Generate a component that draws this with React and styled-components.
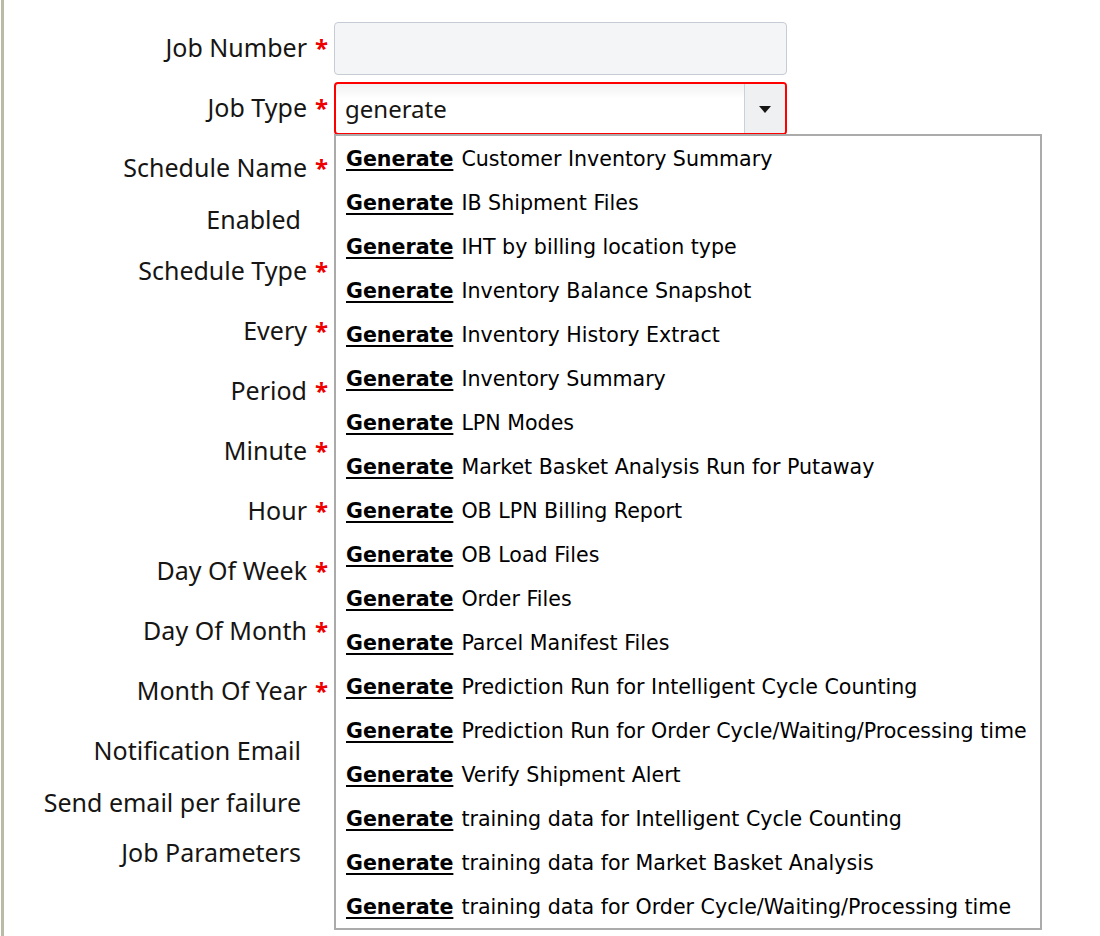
import React from "react";
import styled, { createGlobalStyle } from "styled-components";

const GlobalStyle = createGlobalStyle`
  html, body { margin: 0; padding: 0; background: #ffffff; }
  body { font-family: "Noto Sans", "Liberation Sans", sans-serif; color: #161513; }
`;

const Page = styled.div`
  min-height: 936px;
  padding-left: 1px;
  display: flex;
`;

const Frame = styled.div`
  flex: 1;
  border-left: 3px solid #babca8;
  min-height: 936px;
`;

const Form = styled.div`
  display: grid;
  grid-template-columns: 330px 453px;
  row-gap: 7px;
  padding-top: 22px;
`;

const Label = styled.div`
  box-sizing: border-box;
  display: flex;
  justify-content: flex-end;
  align-items: center;
  height: ${(p) => p.$h}px;
  padding-right: ${(p) => (p.$required ? 6 : 33)}px;
  padding-bottom: 3px;
  font-size: 25px;
  color: #161513;
  white-space: nowrap;
`;

const Star = styled.span`
  display: inline-block;
  width: 13px;
  margin-left: 8px;
  color: #ee0000;
  font-weight: 700;
  font-size: 24px;
  text-align: center;
`;

const Field = styled.div`
  position: relative;
  height: ${(p) => p.$h}px;
`;

const TextInput = styled.div`
  box-sizing: border-box;
  height: 100%;
  border: 1px solid #c5ccd3;
  border-radius: 4px;
  background: #f4f5f6;
`;

const Combo = styled.div`
  box-sizing: border-box;
  height: 100%;
  display: flex;
  border: 2px solid #ff0000;
  border-radius: 4px;
  background: linear-gradient(#f1f1f1, #ffffff 30%);
  overflow: hidden;
`;

const ComboValue = styled.div`
  flex: 1;
  display: flex;
  align-items: center;
  padding-left: 9px;
  font-size: 24px;
  color: #161513;
`;

const ComboButton = styled.div`
  width: 40px;
  display: flex;
  align-items: center;
  justify-content: center;
  background: #eef0f2;
  border-left: 1px solid #c8d1d9;
`;

const Caret = styled.span`
  width: 0;
  height: 0;
  border-left: 6px solid transparent;
  border-right: 6px solid transparent;
  border-top: 7px solid #161513;
  margin-top: 2px;
`;

const Check = styled.div`
  width: 22px;
  height: 22px;
  margin-top: 7px;
  border: 1px solid #8f9aa4;
  border-radius: 3px;
  background: #fff;
`;

const List = styled.div`
  position: absolute;
  top: 52px;
  left: 0;
  width: 708px;
  box-sizing: border-box;
  border: 2px solid #ababab;
  background: #ffffff;
  z-index: 10;
  font-family: "DejaVu Sans", "Liberation Sans", sans-serif;
  font-size: 20.6px;
  color: #000000;
`;

const Item = styled.div`
  height: 44px;
  display: flex;
  align-items: center;
  padding-left: 10px;
  padding-top: 1px;
  box-sizing: border-box;
  white-space: nowrap;
`;

const Match = styled.span`
  font-weight: 700;
  text-decoration: underline;
  text-decoration-thickness: 2px;
  text-underline-offset: 3px;
  margin-right: 8px;
`;

const options = [
  "Customer Inventory Summary",
  "IB Shipment Files",
  "IHT by billing location type",
  "Inventory Balance Snapshot",
  "Inventory History Extract",
  "Inventory Summary",
  "LPN Modes",
  "Market Basket Analysis Run for Putaway",
  "OB LPN Billing Report",
  "OB Load Files",
  "Order Files",
  "Parcel Manifest Files",
  "Prediction Run for Intelligent Cycle Counting",
  "Prediction Run for Order Cycle/Waiting/Processing time",
  "Verify Shipment Alert",
  "training data for Intelligent Cycle Counting",
  "training data for Market Basket Analysis",
  "training data for Order Cycle/Waiting/Processing time",
];

const rows = [
  { label: "Job Number", required: true, kind: "input", h: 53 },
  { label: "Job Type", required: true, kind: "combo", h: 53 },
  { label: "Schedule Name", required: true, kind: "input", h: 53 },
  { label: "Enabled", required: false, kind: "check", h: 36 },
  { label: "Schedule Type", required: true, kind: "input", h: 53 },
  { label: "Every", required: true, kind: "input", h: 53 },
  { label: "Period", required: true, kind: "input", h: 53 },
  { label: "Minute", required: true, kind: "input", h: 53 },
  { label: "Hour", required: true, kind: "input", h: 53 },
  { label: "Day Of Week", required: true, kind: "input", h: 53 },
  { label: "Day Of Month", required: true, kind: "input", h: 53 },
  { label: "Month Of Year", required: true, kind: "input", h: 53 },
  { label: "Notification Email", required: false, kind: "input", h: 53 },
  { label: "Send email per failure", required: false, kind: "check", h: 36 },
  { label: "Job Parameters", required: false, kind: "input", h: 50 },
];

function FieldControl({ row }) {
  if (row.kind === "combo") {
    return (
      <Field $h={row.h}>
        <Combo>
          <ComboValue>generate</ComboValue>
          <ComboButton>
            <Caret />
          </ComboButton>
        </Combo>
        <List>
          {options.map((o) => (
            <Item key={o}>
              <Match>Generate</Match>
              {o}
            </Item>
          ))}
        </List>
      </Field>
    );
  }
  if (row.kind === "check") {
    return (
      <Field $h={row.h}>
        <Check />
      </Field>
    );
  }
  return (
    <Field $h={row.h}>
      <TextInput />
    </Field>
  );
}

export default function App() {
  return (
    <>
      <GlobalStyle />
      <Page>
        <Frame>
          <Form>
            {rows.map((r) => (
              <React.Fragment key={r.label}>
                <Label $h={r.h} $required={r.required}>
                  {r.label}
                  {r.required && <Star>*</Star>}
                </Label>
                <FieldControl row={r} />
              </React.Fragment>
            ))}
          </Form>
        </Frame>
      </Page>
    </>
  );
}
